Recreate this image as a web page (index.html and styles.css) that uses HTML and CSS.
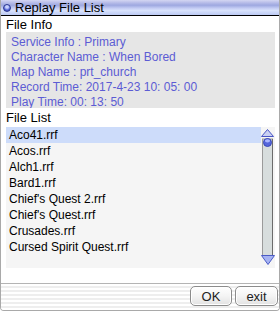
FILE: index.html
```html
<!DOCTYPE html>
<html lang="en">
<head>
  <meta charset="UTF-8" />
  <title>Replay File List</title>
  <link rel="stylesheet" href="styles.css">
</head>
<body>
  <div class="window">
    <div class="titlebar">
      <span class="dot"></span>
      <span class="title">Replay File List</span>
    </div>

    <div class="body">
      <div class="label">File Info</div>
      <div class="info">
        <div>Service Info : Primary</div>
        <div>Character Name : When Bored</div>
        <div>Map Name : prt_church</div>
        <div>Record Time: 2017-4-23 10: 05: 00</div>
        <div>Play Time: 00: 13: 50</div>
      </div>

      <div class="label list-label">File List</div>
      <div class="filelist">
        <ul class="rows">
          <li class="selected">Aco41.rrf</li>
          <li>Acos.rrf</li>
          <li>Alch1.rrf</li>
          <li>Bard1.rrf</li>
          <li>Chief's Quest 2.rrf</li>
          <li>Chief's Quest.rrf</li>
          <li>Crusades.rrf</li>
          <li>Cursed Spirit Quest.rrf</li>
        </ul>
        <div class="scroll">
          <svg width="14" height="136" viewBox="0 0 14 136">
            <!-- track -->
            <rect x="1.5" y="10" width="10" height="117" fill="#d7dddd" stroke="#9a9a9a" />
            <line x1="11.5" y1="10" x2="11.5" y2="127" stroke="#6c6c6c" />
            <!-- up arrow -->
            <path d="M6.5 0.5 L12.5 7.5 L0.5 7.5 Z" fill="#c9d0f2" stroke="#4a56c4" />
            <circle cx="6.5" cy="13.5" r="4" fill="#5566dc" stroke="#3a48b8" />
            <ellipse cx="6.5" cy="11.8" rx="2.6" ry="1.6" fill="#aab6ff" />
            <!-- down arrow -->
            <path d="M0.5 126.5 L13.5 126.5 L7 135.5 Z" fill="#a6b3f2" stroke="#4a5ac6" />
          </svg>
        </div>
      </div>
    </div>

    <div class="footer">
      <button class="btn">OK</button>
      <button class="btn">exit</button>
    </div>
  </div>
</body>
</html>
```

FILE: styles.css
```css
body {
  margin: 0;
  font-family: "Liberation Sans", Arial, sans-serif;
  font-size: 12px;
  background: #ffffff;
}
.window {
  width: 280px;
  height: 311px;
  box-sizing: border-box;
  border-left: 1px solid #a9a9a9;
  border-right: 1px solid #a9a9a9;
  border-bottom: 1px solid #a9a9a9;
  border-radius: 0 0 4px 4px;
  overflow: hidden;
  display: flex;
  flex-direction: column;
}
.titlebar {
  height: 15px;
  border-bottom: 1px solid #000000;
  margin: 0 -1px;
  display: flex;
  align-items: center;
  background: linear-gradient(#d4d6f2 0%, #b4bae8 20%, #9ea8e0 35%, #c4ccf4 55%, #d8e2fc 70%, #bccaf4 100%);
}
.dot {
  width: 8px;
  height: 8px;
  margin: 0 4px 0 3px;
  border-radius: 50%;
  background: radial-gradient(circle at 50% 30%, #c8d2ff 0 25%, #5868d8 60%, #34409c 100%);
  border: 1px solid #2c3890;
  box-sizing: border-box;
}
.title {
  font-size: 13px;
  color: #000000;
  line-height: 15px;
}
.body {
  padding: 0 4px 0 5px;
}
.label {
  height: 15px;
  line-height: 15px;
  padding-top: 1px;
  padding-left: 0;
  color: #000000;
  font-size: 13px;
}
.list-label {
  height: 17px;
  padding-top: 2px;
}
.info {
  height: 76px;
  box-sizing: border-box;
  padding: 3px 0 0 5px;
  background: #e6e6e6;
  color: #5c5cd4;
  line-height: 15px;
  overflow: hidden;
}
.filelist {
  height: 141px;
  margin-bottom: 15px;
  background: #f5f5f5;
  display: flex;
}
.rows {
  list-style: none;
  margin: 0;
  padding: 0;
  flex: 1;
}
.rows li {
  height: 16px;
  line-height: 16px;
  padding-left: 3px;
  color: #000000;
}
.rows .selected {
  background: #cddcfa;
}
.scroll {
  width: 14px;
  padding-top: 2px;
}
.scroll svg {
  display: block;
}
.footer {
  flex: 1;
  border-top: 1px solid #b4b4b4;
  background: repeating-linear-gradient(#ffffff 0 2px, #eeeeee 2px 4px);
  display: flex;
  justify-content: flex-end;
  align-items: flex-start;
  gap: 3px;
  padding: 2px 1px 0 0;
}
.btn {
  height: 20px;
  width: 42px;
  padding: 0;
  border: 1px solid #8c8c8c;
  border-radius: 5px;
  background: linear-gradient(#ffffff, #f4f4f4 50%, #e2e2e2);
  box-shadow: inset 0 0 0 1px #ffffff;
  font-family: "Liberation Sans", Arial, sans-serif;
  font-size: 13px;
  color: #222222;
}
.btn + .btn {
  width: 43px;
}
```
